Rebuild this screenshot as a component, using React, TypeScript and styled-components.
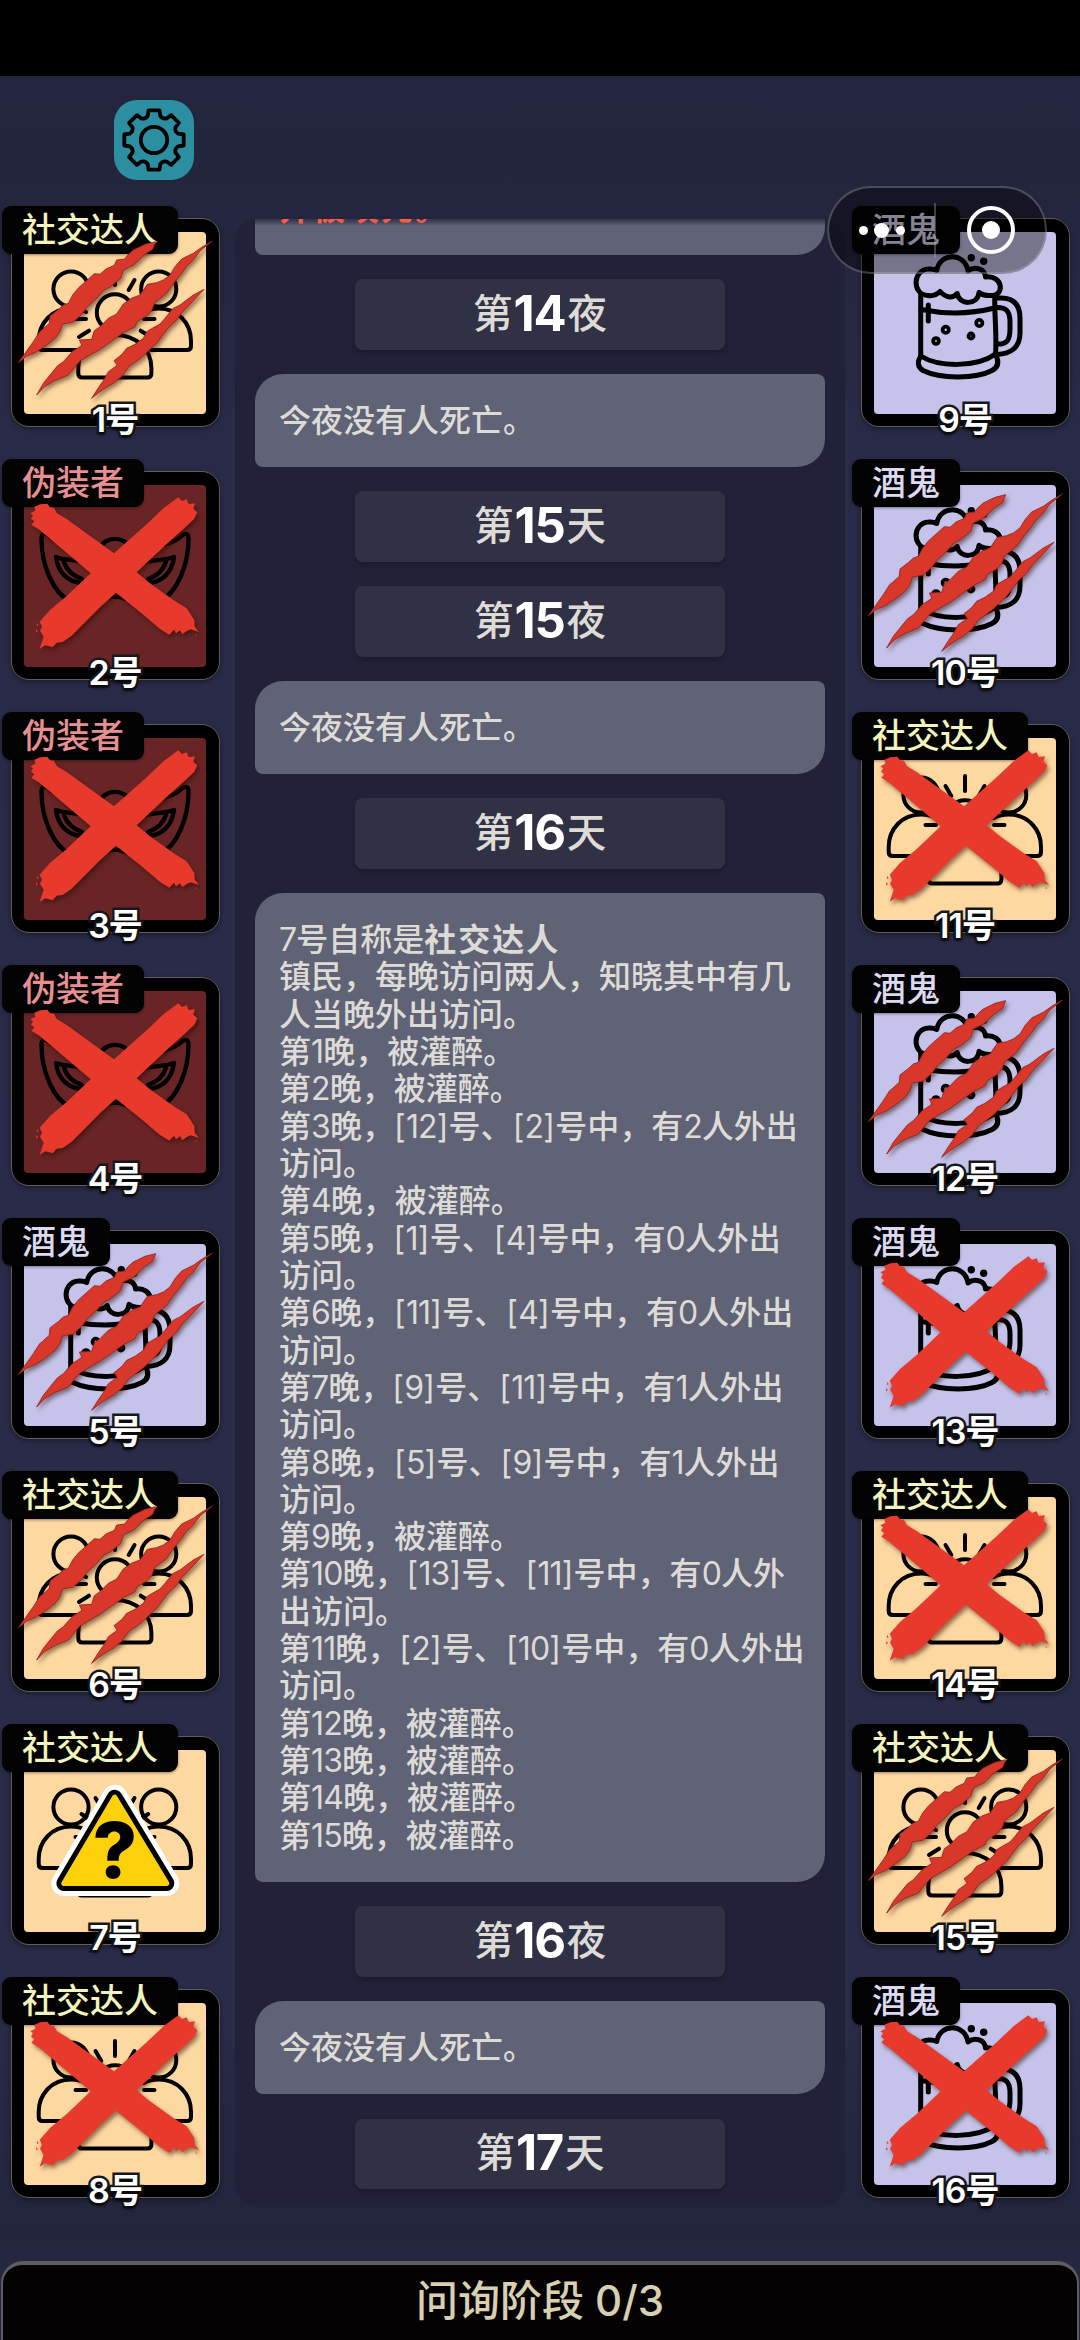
import React from 'react';
import styled, { createGlobalStyle } from 'styled-components';

const GlobalStyle = createGlobalStyle`
  * { box-sizing: border-box; }
  body {
    margin: 0;
    background: #23253f;
    font-family: Inter, 'Noto Sans CJK SC', sans-serif;
  }
`;

type Role = 'social' | 'drunk' | 'fake';
type Mark = 'claw' | 'cross' | 'warn' | 'none';

const ROLES: Record<Role, { name: string; text: string; bg: string }> = {
  social: { name: '社交达人', text: '#f3f3bd', bg: '#fdd8a0' },
  drunk: { name: '酒鬼', text: '#dcdaf2', bg: '#c5c3ea' },
  fake: { name: '伪装者', text: '#e88f92', bg: '#692526' },
};

/* ---------- layout ---------- */

const Screen = styled.div`
  position: relative;
  display: flex;
  flex-direction: column;
  width: 1080px;
  height: 2340px;
  overflow: hidden;
  background: linear-gradient(
    to bottom,
    #23263f 0,
    #23253d 170px,
    #292a47 420px,
    #292b48 2000px,
    #24263f 2190px,
    #22253c 2230px,
    #252640 2261px
  );
`;

const StatusBar = styled.div`
  flex: none;
  height: 76px;
  background: #000;
`;

const Header = styled.header`
  flex: none;
  height: 130px;
  padding: 24px 0 0 114px;
`;

const SettingsButton = styled.button`
  display: flex;
  align-items: center;
  justify-content: center;
  width: 80px;
  height: 80px;
  padding: 0;
  border: 0;
  border-radius: 23px;
  background: #2b8fa1;
`;

const Board = styled.main`
  flex: none;
  display: flex;
  gap: 5px;
  height: 2055px;
`;

const Column = styled.section`
  display: flex;
  flex-direction: column;
  width: 230px;
`;

const Log = styled.section`
  display: flex;
  flex-direction: column;
  align-items: center;
  justify-content: flex-end;
  gap: 24.2px;
  width: 610px;
  height: 1986px;
  margin-top: 13px;
  padding-bottom: 16px;
  border-radius: 22px;
  overflow: hidden;
  background: #212239;
`;

const Footer = styled.footer`
  flex: none;
  display: flex;
  align-items: center;
  justify-content: center;
  height: 90px;
  margin: 0 1px;
  padding-bottom: 14px;
  border: solid #5e5c60;
  border-width: 4px 2px 0;
  border-radius: 22px 22px 0 0;
  background: #040203;
  color: #d9cfb1;
  font-size: 42px;
  font-weight: 500;
  line-height: 50px;
`;

/* ---------- log entries ---------- */

const Bubble = styled.article<{ $alert?: boolean }>`
  flex: none;
  width: 570px;
  padding: 28px 24px;
  border-radius: 28px 8px 28px 8px;
  background: ${(p) =>
    p.$alert ? 'linear-gradient(to bottom, #35374e 58px, #606276 64px)' : '#606276'};
  color: ${(p) => (p.$alert ? '#ff5a45' : '#dddbd6')};
  font-size: 32px;
  font-weight: ${(p) => (p.$alert ? 700 : 500)};
`;

const Line = styled.p`
  margin: 0;
  height: 37.33px;
  line-height: 37.33px;
  white-space: pre;
`;

const Strong = styled.b`
  font-weight: 700;
  letter-spacing: 2px;
`;

const Num = styled.span<{ $bracket?: boolean }>`
  font-weight: 400;
  letter-spacing: ${(p) => (p.$bracket ? '0.3px' : '-0.9px')};
`;

const Phase = styled.div`
  flex: none;
  display: flex;
  align-items: center;
  justify-content: center;
  width: 370px;
  height: 70.5px;
  padding-bottom: 1px;
  border-radius: 8px;
  background: #313145;
  box-shadow: 0 3px 5px rgba(0, 0, 0, 0.22);
  color: #dddbd6;
  font-size: 39.5px;
  font-weight: 500;
  line-height: 60px;
`;

const PhaseNumber = styled.b`
  margin: 0 2px 0 1px;
  color: #fff;
  font-size: 49px;
  font-weight: 700;
  line-height: 50px;
  letter-spacing: -1.2px;
  vertical-align: -3px;
`;

/* ---------- player cards ---------- */

const Slot = styled.div`
  position: relative;
  flex: none;
  height: 253px;
  padding: 12px 0 0 10.5px;
`;

const Card = styled.div<{ $bg: string }>`
  width: 209px;
  height: 209px;
  padding: 0;
  border: 1px solid #625e57;
  border-radius: 18px;
  background: #000;
  box-shadow: 0 2px 5px rgba(0, 0, 0, 0.35);
  display: flex;
  align-items: center;
  justify-content: center;

  > svg {
    display: block;
    border-radius: 4px;
    background: ${(p) => p.$bg};
  }
`;

const Tag = styled.div<{ $color: string }>`
  position: absolute;
  top: 0;
  left: 2px;
  height: 48px;
  padding: 0 20px;
  border-radius: 9px;
  background: #030303;
  color: ${(p) => p.$color};
  font-size: 34px;
  font-weight: 500;
  line-height: 47px;
  white-space: nowrap;
  box-shadow: 0 1px 3px rgba(0, 0, 0, 0.4);
`;

const SeatNumber = styled.div`
  position: absolute;
  top: 190px;
  left: 0;
  width: 230px;
  text-align: center;
  color: #fff;
  font-size: 34px;
  font-weight: 600;
  line-height: 48px;
  letter-spacing: -1px;
  -webkit-text-stroke: 5px #18181c;
  paint-order: stroke fill;
  text-shadow: 0 3px 3px rgba(0, 0, 0, 0.7);
`;

const MarkLayer = styled.svg`
  position: absolute;
  top: 0;
  left: 0;
  filter: drop-shadow(2px 3px 2px rgba(40, 10, 0, 0.5));
`;

/* ---------- system capsule ---------- */

const Capsule = styled.div`
  position: absolute;
  top: 186px;
  left: 827px;
  display: flex;
  align-items: center;
  width: 220px;
  height: 88px;
  border: 2px solid rgba(190, 190, 205, 0.32);
  border-radius: 44px;
  background: rgba(0, 0, 0, 0.4);
`;

const More = styled.div`
  display: flex;
  align-items: center;
  justify-content: center;
  gap: 6.5px;
  width: 105px;
`;

const Dot = styled.i<{ $size: number }>`
  width: ${(p) => p.$size}px;
  height: ${(p) => p.$size}px;
  border-radius: 50%;
  background: #fff;
`;

const Divider = styled.i`
  width: 2px;
  height: 55px;
  background: rgba(190, 190, 205, 0.32);
`;

const Ring = styled.div`
  display: flex;
  align-items: center;
  justify-content: center;
  width: 48px;
  height: 48px;
  margin-left: 31px;
  border: 4px solid #fff;
  border-radius: 50%;
`;

/* ---------- drawings ---------- */

const gearPath = () => {
  const pt = (r: number, deg: number) => {
    const a = (deg * Math.PI) / 180;
    return `${(32 + r * Math.sin(a)).toFixed(2)} ${(32 - r * Math.cos(a)).toFixed(2)}`;
  };
  let d = '';
  for (let k = 0; k < 8; k++) {
    const c = k * 45;
    d += `${k ? 'L' : 'M'}${pt(25, c - 14.5)}L${pt(30.2, c - 10.5)}L${pt(30.2, c + 10.5)}L${pt(25, c + 14.5)}`;
    d += `Q${pt(22.2, c + 22.5)} ${pt(25, c + 30.5)}`;
  }
  return d + 'Z';
};

const Gear = () => (
  <svg width="64" height="64" viewBox="0 0 64 64" fill="none" stroke="#000" strokeWidth="3.8" strokeLinejoin="round">
    <path d={gearPath()} />
    <circle cx="32" cy="32" r="13.2" />
  </svg>
);

const art = {
  width: 182,
  height: 182,
  viewBox: '0 0 182 182',
  fill: 'none',
  stroke: '#000',
  strokeLinecap: 'round' as const,
  strokeLinejoin: 'round' as const,
};

const SocialIcon = () => (
  <svg {...art} strokeWidth="4">
    <circle cx="47" cy="57" r="17.6" />
    <circle cx="134.7" cy="57" r="17.6" />
    <path d="M62 80C57 77.5 52 76.5 47 76.5C28 76.5 14.7 91 14.7 109V114Q14.7 118 18.7 118H55" />
    <path d="M119.7 80C124.7 77.5 129.7 76.5 134.7 76.5C153.7 76.5 167 91 167 109V114Q167 118 163 118H127" />
    <circle cx="91" cy="80.5" r="18.2" />
    <path d="M91 103C70 103 54.3 117 54.3 136V141.5Q54.3 145.5 58.3 145.5H123.4Q127.4 145.5 127.4 141.5V136C127.4 117 112 103 91 103Z" />
    <path d="M91 38V53M71.5 48L77.3 58M110.5 48L104.7 58M57.5 64L66 69.5M124.2 64L115.7 69.5M51.5 87H62M120 87H130.5M55 105L65 98.7M126.7 105L116.7 98.7" />
  </svg>
);

const BeerIcon = () => (
  <svg {...art} strokeWidth="5">
    <path d="M54 63.5C38 63 38 38 54.5 37Q59 36.5 62.7 38.5C66 20 91 20 94 39C101 33.5 111 37 111.5 45C130 43 130 64 118 63.5Q109 64 105 60.5C104 73.5 85 73.5 83.3 61.5Q76 69.5 66 59.5Q61 64.5 54 63.5Z" />
    <path d="M46.7 63V124M120.8 64C120.3 84 123 104 121.5 122" />
    <path d="M47 77.5Q85 85 120.5 76" />
    <path d="M46.7 124C65 135.5 103 135.5 121.5 122C125 129 125 135 118 138.5C102 147 66 147 49 138.5C43 135 43.5 129 46.7 124Z" />
    <path d="M122 66H127C140 66 146 73 146 86V101C146 116 136 122 123 122.5" />
    <path d="M122 75.5C132 75 136 79 136 90V97C136 108 133 112.5 123 112" />
    <path d="M54.3 73V89" />
    <g strokeWidth="3.8">
      <circle cx="71.7" cy="97.7" r="3.1" />
      <circle cx="62" cy="109" r="2.9" />
      <circle cx="105.3" cy="91" r="3.1" />
      <circle cx="97" cy="104" r="2.5" />
    </g>
    <g fill="#000" stroke="none">
      <circle cx="97.3" cy="25.7" r="3.7" />
      <circle cx="109.7" cy="29.3" r="3.7" />
    </g>
  </svg>
);

const MaskIcon = () => (
  <svg {...art} strokeWidth="4.4">
    <path d="M91 111.5C76 112 68 124 46 116C29 108 17.5 80 17.5 54Q17.5 46 24 50C34 60 54 62 76 64C80 50.5 102 50.5 106 64C114 64 116 62 122 61.5C140 61.5 150 58 158 50.5Q164.5 46 164.5 54C164.5 80 153 108 136 116C114 124 106 112 91 111.5Z" />
    <path d="M32 72C44 77 62 73 74 84C72 94 66 99 58 98C44 97 34 88 32 72ZM150 72C138 77 120 73 108 84C110 94 116 99 124 98C138 97 148 88 150 72Z" />
    <path d="M40 77C43 86 49 91 58 94M142 77C139 86 133 91 124 94" />
  </svg>
);

const Claws = () => (
  <MarkLayer width="230" height="240" viewBox="0 438 690 720" fill="#d8372a" stroke="#8e2420" strokeWidth="2.5" strokeLinejoin="round">
    <path d="M467 545L435 553L400 570L385 583L374 597L350 600L343 616L318 627L300 643L283 641L262 660L236 683L218 705L205 730L190 735L176 748L150 768L148 790L128 808L119 815L100 845L55 908L80 889L110 875L140 855L165 835L180 815L187 792L220 786L246 762L262 740L285 720L312 690L332 680L362 655L370 630L402 614L432 585L458 568Z" />
    <path d="M637 543L605 562L580 580L545 597L525 620L510 645L490 660L470 668L442 673L420 705L396 714L370 732L350 762L325 775L300 800L283 812L275 838L238 840L246 856L218 874L190 905L172 918L150 945L130 970L110 1005L134 980L165 961L205 945L225 920L240 903L270 885L300 868L335 843L370 818L405 800L412 784L440 768L456 750L464 728L500 700L522 668L545 640L560 618L578 602L600 573Z" />
    <path d="M612 688L580 705L540 735L518 746L495 775L480 792L462 802L440 815L430 835L405 853L380 865L366 883L342 902L352 916L325 935L310 962L296 982L275 1015L296 998L318 982L342 968L366 948L386 920L410 903L430 888L450 868L470 850L490 823L505 803L530 780L545 758L580 722Z" />
  </MarkLayer>
);

const Cross = () => (
  <MarkLayer width="230" height="240" viewBox="0 57 690 720" fill="#e83a2c">
    <path d="M121 193L142 191L150 202L162 203L170 219L200 237L342 340L440 253L492 203L535 172L546 183L560 178L566 192L585 190L580 206L592 217L583 236L560 258L500 312L410 397L450 430L520 480L560 505L583 540L584 560L597 576L572 568L560 573L547 583L540 571L528 580L522 569L508 584L480 567L430 524L348 458L300 502L215 587L188 606L170 608L158 622L136 616L119 626L131 590L120 572L126 560L119 545L150 510L200 468L272 400L190 330L118 269L94 254L103 244L93 236L99 226L91 220L106 212L103 200Z" />
    <path d="M112 548L116 556L110 558ZM108 568L114 572L109 578ZM588 583L592 588L586 586Z" />
  </MarkLayer>
);

const WarningLayer = styled(MarkLayer)`
  filter: none;
`;

const Warning = () => (
  <WarningLayer width="230" height="240" viewBox="0 42 690 720" strokeLinejoin="round">
    <path d="M344 262L192 520H500Z" fill="#fff" stroke="#fff" strokeWidth="76" />
    <path d="M344 262L192 520H500Z" fill="#000" stroke="#000" strokeWidth="46" />
    <path d="M344 262L192 520H500Z" fill="#fdd10a" stroke="#fdd10a" strokeWidth="16" />
    <text x="345" y="503" textAnchor="middle" fontFamily="Inter, sans-serif" fontWeight="800" fontSize="232" fill="#000">
      ?
    </text>
  </WarningLayer>
);

const ICONS: Record<Role, React.FC> = { social: SocialIcon, drunk: BeerIcon, fake: MaskIcon };
const MARKS: Record<Mark, React.FC | null> = { claw: Claws, cross: Cross, warn: Warning, none: null };

/* ---------- data ---------- */

const LEFT: [Role, Mark][] = [
  ['social', 'claw'],
  ['fake', 'cross'],
  ['fake', 'cross'],
  ['fake', 'cross'],
  ['drunk', 'claw'],
  ['social', 'claw'],
  ['social', 'warn'],
  ['social', 'cross'],
];

const RIGHT: [Role, Mark][] = [
  ['drunk', 'none'],
  ['drunk', 'claw'],
  ['social', 'cross'],
  ['drunk', 'claw'],
  ['drunk', 'cross'],
  ['social', 'cross'],
  ['social', 'claw'],
  ['drunk', 'cross'],
];

const REPORT = [
  '镇民，每晚访问两人，知晓其中有几',
  '人当晚外出访问。',
  '第1晚，被灌醉。',
  '第2晚，被灌醉。',
  '第3晚，[12]号、[2]号中，有2人外出',
  '访问。',
  '第4晚，被灌醉。',
  '第5晚，[1]号、[4]号中，有0人外出',
  '访问。',
  '第6晚，[11]号、[4]号中，有0人外出',
  '访问。',
  '第7晚，[9]号、[11]号中，有1人外出',
  '访问。',
  '第8晚，[5]号、[9]号中，有1人外出',
  '访问。',
  '第9晚，被灌醉。',
  '第10晚，[13]号、[11]号中，有0人外',
  '出访问。',
  '第11晚，[2]号、[10]号中，有0人外出',
  '访问。',
  '第12晚，被灌醉。',
  '第13晚，被灌醉。',
  '第14晚，被灌醉。',
  '第15晚，被灌醉。',
];

/* ---------- components ---------- */

const Text = ({ children }: { children: string }) => (
  <>
    {children.split(/([0-9]+|[[\]])/).map((part, i) =>
      i % 2 ? (
        <Num key={i} $bracket={part === '[' || part === ']'}>
          {part}
        </Num>
      ) : (
        part
      ),
    )}
  </>
);

const Player = ({ seat, role, mark }: { seat: number; role: Role; mark: Mark }) => {
  const Icon = ICONS[role];
  const Overlay = MARKS[mark];
  return (
    <Slot>
      <Card $bg={ROLES[role].bg}>
        <Icon />
      </Card>
      <Tag $color={ROLES[role].text}>{ROLES[role].name}</Tag>
      {Overlay && <Overlay />}
      <SeatNumber>{seat}号</SeatNumber>
    </Slot>
  );
};

const PhaseChip = ({ n, unit }: { n: number; unit: '天' | '夜' }) => (
  <Phase>
    <span>
      第<PhaseNumber>{n}</PhaseNumber>
      {unit}
    </span>
  </Phase>
);

const Quiet = () => (
  <Bubble>
    <Line>今夜没有人死亡。</Line>
  </Bubble>
);

export default function App() {
  return (
    <>
      <GlobalStyle />
      <Screen>
        <StatusBar />
        <Header>
          <SettingsButton aria-label="设置">
            <Gear />
          </SettingsButton>
        </Header>
        <Board>
          <Column>
            {LEFT.map(([role, mark], i) => (
              <Player key={i} seat={i + 1} role={role} mark={mark} />
            ))}
          </Column>
          <Log>
            <Bubble $alert>
              <Line>
                <Strong>并被咬死。</Strong>
              </Line>
            </Bubble>
            <PhaseChip n={14} unit="夜" />
            <Quiet />
            <PhaseChip n={15} unit="天" />
            <PhaseChip n={15} unit="夜" />
            <Quiet />
            <PhaseChip n={16} unit="天" />
            <Bubble>
              <Line>
                <Text>7号自称是</Text>
                <Strong>社交达人</Strong>
              </Line>
              {REPORT.map((line, i) => (
                <Line key={i}>
                  <Text>{line}</Text>
                </Line>
              ))}
            </Bubble>
            <PhaseChip n={16} unit="夜" />
            <Quiet />
            <PhaseChip n={17} unit="天" />
          </Log>
          <Column>
            {RIGHT.map(([role, mark], i) => (
              <Player key={i} seat={i + 9} role={role} mark={mark} />
            ))}
          </Column>
        </Board>
        <Footer>问询阶段 0/3</Footer>
        <Capsule>
          <More>
            <Dot $size={9} />
            <Dot $size={15} />
            <Dot $size={9} />
          </More>
          <Divider />
          <Ring>
            <Dot $size={18} />
          </Ring>
        </Capsule>
      </Screen>
    </>
  );
}
